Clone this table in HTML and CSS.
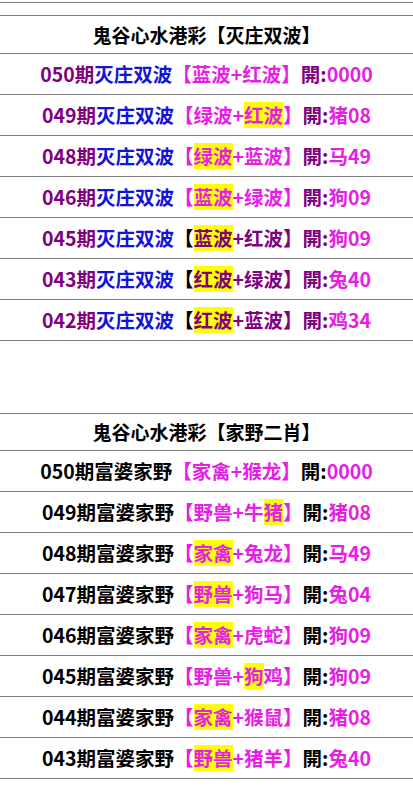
FILE: index.html
```html
<!DOCTYPE html>
<html lang="zh-CN">
<head>
  <meta charset="UTF-8" />
  <meta name="viewport" content="width=device-width, initial-scale=1.0"/>
  <title>鬼谷心水港彩</title>
  <link rel="stylesheet" href="styles.css">
</head>
<body>
  <div class="box first">
    <div class="blank"></div>
    <div class="title">鬼谷心水港彩【灭庄双波】</div>
    <ul class="list">
      <li><span class="qi">050期</span><span class="blue">灭庄双波</span><span class="pink">【蓝波+红波】</span><span class="qi">開:</span><span class="pink">0000</span></li>
      <li><span class="qi">049期</span><span class="blue">灭庄双波</span><span class="pink">【绿波+<span class="hl">红波</span>】</span><span class="qi">開:</span><span class="pink">猪08</span></li>
      <li><span class="qi">048期</span><span class="blue">灭庄双波</span><span class="pink">【<span class="hl">绿波</span>+蓝波】</span><span class="qi">開:</span><span class="pink">马49</span></li>
      <li><span class="qi">046期</span><span class="blue">灭庄双波</span><span class="pink">【<span class="hl">蓝波</span>+绿波】</span><span class="qi">開:</span><span class="pink">狗09</span></li>
      <li><span class="qi">045期</span><span class="blue">灭庄双波</span><span class="dark">【</span><span class="qi"><span class="hl">蓝波</span>+红波】</span><span class="qi">開:</span><span class="pink">狗09</span></li>
      <li><span class="qi">043期</span><span class="blue">灭庄双波</span><span class="dark">【</span><span class="qi"><span class="hl">红波</span>+绿波】</span><span class="qi">開:</span><span class="pink">兔40</span></li>
      <li><span class="qi">042期</span><span class="blue">灭庄双波</span><span class="dark">【</span><span class="qi"><span class="hl">红波</span>+蓝波】</span><span class="qi">開:</span><span class="pink">鸡34</span></li>
    </ul>
  </div>

  <div class="box second">
    <div class="title">鬼谷心水港彩【家野二肖】</div>
    <ul class="list">
      <li><span class="dark">050期富婆家野</span><span class="pink">【家禽+猴龙】</span><span class="dark">開:</span><span class="pink">0000</span></li>
      <li><span class="dark">049期富婆家野</span><span class="pink">【野兽+牛<span class="hl">猪</span>】</span><span class="dark">開:</span><span class="pink">猪08</span></li>
      <li><span class="dark">048期富婆家野</span><span class="pink">【<span class="hl">家禽</span>+兔龙】</span><span class="dark">開:</span><span class="pink">马49</span></li>
      <li><span class="dark">047期富婆家野</span><span class="pink">【<span class="hl">野兽</span>+狗马】</span><span class="dark">開:</span><span class="pink">兔04</span></li>
      <li><span class="dark">046期富婆家野</span><span class="pink">【<span class="hl">家禽</span>+虎蛇】</span><span class="dark">開:</span><span class="pink">狗09</span></li>
      <li><span class="dark">045期富婆家野</span><span class="pink">【野兽+<span class="hl">狗</span>鸡】</span><span class="dark">開:</span><span class="pink">狗09</span></li>
      <li><span class="dark">044期富婆家野</span><span class="pink">【<span class="hl">家禽</span>+猴鼠】</span><span class="dark">開:</span><span class="pink">猪08</span></li>
      <li><span class="dark">043期富婆家野</span><span class="pink">【<span class="hl">野兽</span>+猪羊】</span><span class="dark">開:</span><span class="pink">兔40</span></li>
    </ul>
  </div>
</body>
</html>
```

FILE: styles.css
```css
body {
  margin: 0;
  background: #fff;
  font-family: "Noto Sans CJK SC", "Noto Sans", sans-serif;
  font-weight: bold;
  color: #000;
}
.box {
  border-top: 1px solid #808080;
}
.first {
  margin-top: 2px;
}
.second {
  margin-top: 72px;
}
.blank {
  height: 12px;
  border-bottom: 1px solid #808080;
}
.title {
  height: 37px;
  line-height: 37px;
  text-align: center;
  font-size: 19px;
  border-bottom: 1px solid #808080;
}
.second .title {
  height: 36px;
  line-height: 36px;
}
.list {
  list-style: none;
  margin: 0;
  padding: 0;
}
.list li {
  height: 40px;
  line-height: 40px;
  text-align: center;
  font-size: 19.5px;
  border-bottom: 1px solid #808080;
  white-space: nowrap;
}
.qi {
  color: #800080;
}
.blue {
  color: #1414d8;
}
.pink {
  color: #e61ee6;
}
.dark {
  color: #000;
}
.hl {
  display: inline-block;
  line-height: 26px;
  background: #ffff00;
}
```
